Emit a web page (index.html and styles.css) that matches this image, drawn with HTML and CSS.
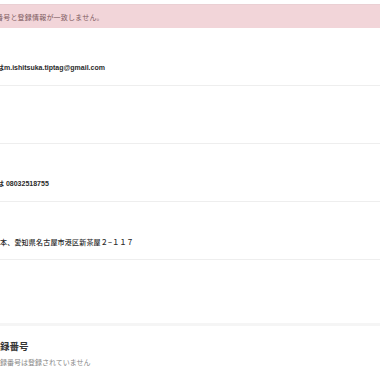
FILE: index.html
```html
<!DOCTYPE html>
<html lang="ja">

<head>
    <meta charset="UTF-8">
    <meta name="viewport" content="width=device-width, initial-scale=1.0">
    <title>登録情報</title>
    <link rel="stylesheet" href="styles.css">
</head>

<body>
    <div class="alert">
        <span class="alert-text">番号と登録情報が一致しません。</span>
    </div>

    <div class="info-list">
        <div class="info-row">
            <span class="info-value bold shift">はm.ishitsuka.tiptag@gmail.com</span>
        </div>
        <div class="info-row"></div>
        <div class="info-row">
            <span class="info-value bold shift">は 08032518755</span>
        </div>
        <div class="info-row">
            <span class="info-value medium">本、愛知県名古屋市港区新茶屋２−１１７</span>
        </div>
        <div class="info-row last"></div>
    </div>

    <div class="section">
        <h2 class="section-title">録番号</h2>
        <p class="section-note">録番号は登録されていません</p>
    </div>
</body>

</html>
```

FILE: styles.css
```css
body {
    margin: 0;
    width: 380px;
    height: 380px;
    overflow: hidden;
    background-color: #fff;
    font-family: "Noto Sans CJK JP", "Liberation Sans", sans-serif;
    color: #333;
}

.alert {
    margin-top: 4px;
    height: 24px;
    display: flex;
    align-items: center;
    background-color: #f2d5d9;
    border-top: 1px solid #ead0d4;
    box-sizing: border-box;
    font-size: 7px;
    color: #7d5a5e;
}

.alert-text {
    margin-left: -4px;
    letter-spacing: 0.2px;
}

.info-row {
    height: 58px;
    border-bottom: 1px solid #eeeeee;
    display: flex;
    align-items: flex-end;
    padding-bottom: 12px;
    box-sizing: border-box;
}

.info-row.last {
    height: 66px;
    border-bottom: 3px solid #f5f5f5;
}

.info-value {
    font-size: 7px;
    line-height: 10px;
    letter-spacing: 0.2px;
}

.medium {
    font-weight: 500;
    color: #2a2a2a;
}

.bold {
    font-family: "Liberation Sans", "Noto Sans CJK JP", sans-serif;
    font-weight: bold;
    font-size: 7px;
    letter-spacing: 0;
    color: #2a2a2a;
}

.shift {
    margin-left: -3px;
}

.section {
    padding-top: 14px;
}

.section-title {
    margin: 0;
    font-size: 9.5px;
    line-height: 12px;
    font-weight: bold;
}

.section-note {
    margin: 5px 0 0;
    font-size: 7px;
    line-height: 10px;
    color: #888;
}
```
